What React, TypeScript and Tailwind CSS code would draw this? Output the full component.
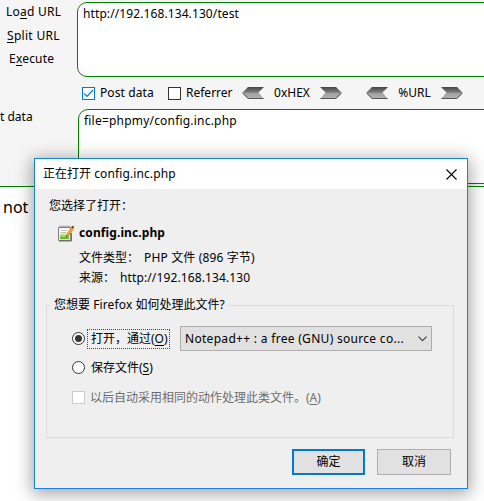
import type { ReactNode } from 'react';

function Arrow({ flip = false, id }: { flip?: boolean; id: string }) {
  return (
    <svg width="22" height="12" viewBox="0 0 22 12" className="shrink-0">
      <defs>
        <linearGradient id={id} x1="0" y1="0" x2="0" y2="1">
          <stop offset="0" stopColor="#444" />
          <stop offset="0.48" stopColor="#858585" />
          <stop offset="0.52" stopColor="#a2a2a2" />
          <stop offset="1" stopColor="#b4b4b4" />
        </linearGradient>
      </defs>
      <g transform={flip ? 'translate(22 0) scale(-1 1)' : undefined}>
        <path d="M6 0H22L16.5 5.5L22 12H6L0 6Z" fill={`url(#${id})`} />
        <path d="M1 6.5L6.3 11.5H21.5" fill="none" stroke="#555" />
      </g>
    </svg>
  );
}

function NoteIcon() {
  return (
    <svg width="17" height="17" viewBox="0 0 17 17" className="shrink-0">
      <defs>
        <linearGradient id="page" x1="0" y1="0" x2="0" y2="1">
          <stop offset="0.2" stopColor="#fff" />
          <stop offset="0.5" stopColor="#d8f0a8" />
          <stop offset="1" stopColor="#4cab16" />
        </linearGradient>
      </defs>
      <path d="M.6 2.5H12.4V15.4H.6Z" fill="#fff" stroke="#777" />
      <path d="M2 4H11V14H2Z" fill="url(#page)" />
      <path d="M1.5 1.5H12" stroke="#888" strokeWidth="2" strokeDasharray="1 1" />
      <path d="M3 5.5H9M3 7.5H8" stroke="#aaa" strokeWidth=".7" />
      <path d="M1 16H13.5V8" fill="none" stroke="#555" strokeWidth=".8" />
      <path d="M8 12L9 9L13.5 2L15.5 3.5L11 10.5Z" fill="#f6ae21" stroke="#b86f12" strokeWidth=".6" />
      <path d="M13.3 2L14.3 .7L16.2 1.7L15.4 3.5Z" fill="#9c1f2b" />
      <path d="M8 12L8.5 10.5L9.5 11Z" fill="#333" />
    </svg>
  );
}

function Line({ className, children }: { className: string; children: ReactNode }) {
  return <div className={`flex items-center whitespace-pre ${className}`}>{children}</div>;
}

function Key({ children }: { children: ReactNode }) {
  return <span className="underline underline-offset-2">{children}</span>;
}

function Toolbar() {
  return (
    <div className="h-[187px] border-b border-[#008000] bg-[#f5f5f5]">
      <div className="flex pt-0.5">
        <div className="flex w-[77px] shrink-0 flex-col">
          <Line className="h-5 pl-1.5 tracking-[0.25px]"><span>Lo<Key>a</Key>d URL</span></Line>
          <Line className="mt-1 h-5 pl-[7px] tracking-[0.3px]"><span><Key>S</Key>plit URL</span></Line>
          <Line className="mt-[3px] h-5 pl-[9px] tracking-[0.2px]"><span>E<Key>x</Key>ecute</span></Line>
        </div>
        <div className="-mr-4 h-[75px] flex-1 rounded-[10px] border border-[#008000] bg-white pl-[5px] pt-[3px]">
          <Line className="h-4 tracking-[0.1px]">http://192.168.134.130/test</Line>
        </div>
      </div>
      <div className="flex h-8 items-center pl-[82px]">
        <div className="flex size-[13px] items-center justify-center border border-[#0078d7] bg-white">
          <svg width="11" height="11" viewBox="0 0 11 11"><path d="M1 5.3L4 8.4L10 2" fill="none" stroke="#0078d7" strokeWidth="1.2" /></svg>
        </div>
        <Line className="w-[73px] pl-[5px] tracking-[0.1px]">Post data</Line>
        <div className="size-[13px] shrink-0 border border-[#333] bg-white" />
        <Line className="w-[61px] pl-[5px]">Referrer</Line>
        <Arrow id="hexLeft" />
        <Line className="w-14 justify-center">0xHEX</Line>
        <Arrow id="hexRight" flip />
        <Line className="w-[24px]">{' '}</Line>
        <Arrow id="urlLeft" />
        <Line className="w-[53px] justify-center">%URL</Line>
        <Arrow id="urlRight" flip />
      </div>
      <div className="flex">
        <Line className="h-4 w-[78px] shrink-0">t data</Line>
        <div className="-mr-4 h-[75px] flex-1 rounded-[10px] border border-[#008000] bg-white pl-[5px] pt-[3px]">
          <Line className="h-4 tracking-[0.2px]">file=phpmy/config.inc.php</Line>
        </div>
      </div>
    </div>
  );
}

function Dialog() {
  return (
    <div className="absolute left-[34px] top-[158px] flex h-[331px] w-[434px] flex-col border border-[#1883d7] bg-[#efefef] shadow-[0_3px_16px_2px_rgba(0,0,0,0.36)]">
      <div className="flex h-[30px] shrink-0 items-center justify-between bg-white pl-2 pr-2.5">
        <span className="whitespace-pre">正在打开 <span className="tracking-[0.12px]">config.inc.php</span></span>
        <svg width="11" height="11" viewBox="0 0 11 11"><path d="M.5 .5L10.5 10.5M10.5 .5L.5 10.5" stroke="#000" strokeWidth="1.1" /></svg>
      </div>
      <Line className="mt-[9px] h-4 pl-3.5">您选择了打开：</Line>
      <div className="mt-2.5 flex h-[18px] items-center pl-[23px]">
        <NoteIcon />
        <span className="pl-1 font-bold tracking-[0.1px]">config.inc.php</span>
      </div>
      <Line className="mt-[7px] h-[18px] pl-11"><span className="w-[65px]">文件类型：</span><span className="tracking-[0.15px]">PHP 文件 (896 字节)</span></Line>
      <Line className="mt-0.5 h-[18px] pl-11"><span className="w-[41px]">来源：</span><span className="tracking-[0.12px]">http://192.168.134.130</span></Line>
      <fieldset className="ml-[11px] mr-[13px] mt-[9px] h-[142px] border border-[#dcdcdc]">
        <legend className="ml-1 h-[18px] whitespace-pre px-[3px] leading-[18px]">您想要 <span className="tracking-[0.15px]">Firefox</span> 如何处理此文件?</legend>
        <div className="mt-3 flex h-[25px] items-center pl-[25px]">
          <span className="flex size-[13px] items-center justify-center rounded-full border border-[#333] bg-white"><span className="size-[7px] rounded-full bg-[#333]" /></span>
          <span className="ml-0.5 flex h-5 w-[83px] items-center whitespace-pre border border-dotted border-[#444] pl-[3px]">打开，通过(<Key>O</Key>)</span>
          <span className="ml-2.5 flex h-[25px] w-[252px] items-center justify-between whitespace-pre border border-[#adadad] bg-[#e1e1e1] pl-1 pr-1">
            <span className="tracking-[0.3px]">Notepad++ : a free (GNU) source co...</span>
            <svg width="9" height="6" viewBox="0 0 9 6"><path d="M.5 .7L4.5 4.7L8.5 .7" fill="none" stroke="#444" strokeWidth="1.2" /></svg>
          </span>
        </div>
        <div className="mt-2 flex h-[17px] items-center pl-[25px]">
          <span className="size-[13px] rounded-full border border-[#333] bg-white" />
          <span className="pl-1.5">保存文件(<Key>S</Key>)</span>
        </div>
        <div className="mt-[13px] flex h-[17px] items-center pl-[25px] text-[#6d6d6d]">
          <span className="size-[13px] border border-[#ccc] bg-white" />
          <span className="pl-[5px]">以后自动采用相同的动作处理此类文件。(<Key>A</Key>)</span>
        </div>
      </fieldset>
      <div className="mt-[11px] flex h-[26px] justify-end gap-3 pr-4">
        <button className="w-[73px] border-2 border-[#0078d7] bg-[#e1e1e1]">确定</button>
        <button className="w-[74px] border border-[#adadad] bg-[#e1e1e1]">取消</button>
      </div>
    </div>
  );
}

export default function App() {
  return (
    <div className="relative h-[501px] w-[484px] overflow-hidden bg-white font-['Noto_Sans','Noto_Sans_CJK_SC',sans-serif] text-[12px] leading-4 text-black">
      <Toolbar />
      <div className="pl-[3px] pt-1.5 text-[16px] leading-7">not</div>
      <Dialog />
    </div>
  );
}
